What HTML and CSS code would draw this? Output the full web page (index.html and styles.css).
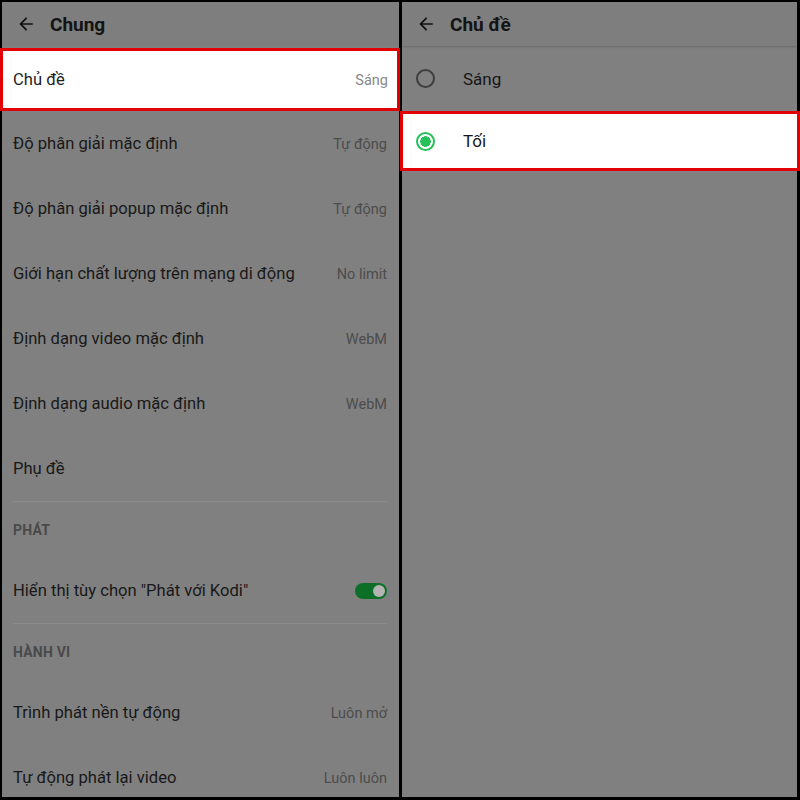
FILE: index.html
```html
<!DOCTYPE html>
<html lang="vi">
<head>
<meta charset="utf-8">
<link rel="stylesheet" href="styles.css">
</head>
<body>
<div class="frame">
  <section class="panel">
    <header class="bar">
      <svg class="back" viewBox="0 0 24 24"><path d="M20 11H7.83l5.59-5.59L12 4l-8 8 8 8 1.41-1.41L7.83 13H20v-2z"/></svg>
      <h1 class="title">Chung</h1>
    </header>
    <div class="list">
      <div class="row marked"><span class="label">Chủ đề</span><span class="value">Sáng</span></div>
      <div class="row"><span class="label">Độ phân giải mặc định</span><span class="value">Tự động</span></div>
      <div class="row"><span class="label">Độ phân giải popup mặc định</span><span class="value">Tự động</span></div>
      <div class="row"><span class="label">Giới hạn chất lượng trên mạng di động</span><span class="value">No limit</span></div>
      <div class="row"><span class="label">Định dạng video mặc định</span><span class="value">WebM</span></div>
      <div class="row"><span class="label">Định dạng audio mặc định</span><span class="value">WebM</span></div>
      <div class="row"><span class="label">Phụ đề</span></div>
      <div class="divider"></div>
      <div class="category">PHÁT</div>
      <div class="row"><span class="label">Hiển thị tùy chọn "Phát với Kodi"</span><span class="toggle"><span class="knob"></span></span></div>
      <div class="divider"></div>
      <div class="category">HÀNH VI</div>
      <div class="row"><span class="label">Trình phát nền tự động</span><span class="value">Luôn mở</span></div>
      <div class="row"><span class="label">Tự động phát lại video</span><span class="value">Luôn luôn</span></div>
    </div>
  </section>
  <section class="panel">
    <header class="bar shadow">
      <svg class="back" viewBox="0 0 24 24"><path d="M20 11H7.83l5.59-5.59L12 4l-8 8 8 8 1.41-1.41L7.83 13H20v-2z"/></svg>
      <h1 class="title">Chủ đề</h1>
    </header>
    <div class="list">
      <div class="option"><span class="radio"></span><span class="opt-label">Sáng</span></div>
      <div class="option marked-opt"><span class="radio on"></span><span class="opt-label">Tối</span></div>
    </div>
  </section>
</div>
</body>
</html>
```
FILE: styles.css
```css
* { box-sizing: border-box; }
html, body { margin: 0; padding: 0; }
body {
  background: #000;
  width: 800px;
  height: 800px;
  overflow: hidden;
  font-family: Roboto, "Noto Sans", sans-serif;
}
.frame {
  display: flex;
  gap: 3px;
  padding: 2px 3px 3px 2px;
  height: 800px;
}
.panel {
  background: #808080;
  display: flex;
  flex-direction: column;
  position: relative;
}
.panel:first-child { width: 397px; }
.panel:last-child { width: 395px; }
.bar {
  height: 44px;
  flex: none;
  display: flex;
  align-items: center;
  background: #7e7e7e;
  position: relative;
  z-index: 1;
}
.bar.shadow { box-shadow: 0 1px 2px rgba(0,0,0,0.18); }
.back {
  width: 20px;
  height: 20px;
  margin-left: 14px;
  fill: #111;
}
.title {
  margin: 0 0 0 14px;
  font-size: 19px;
  font-weight: 700;
  color: #141414;
}
.list { display: flex; flex-direction: column; }
.row {
  height: 65px;
  flex: none;
  display: flex;
  align-items: center;
  justify-content: space-between;
  padding: 0 12px 0 11px;
}
.label { font-size: 16.6px; color: #181818; }
.value { font-size: 14.5px; color: #4c4c4c; padding-top: 1px; }
.row.marked {
  height: 63px;
  margin: 2px -1px 0 -2px;
  border: 3px solid #e30000;
  background: #fff;
  padding: 0 9px 0 10px;
}
.row.marked .label { color: #1f1f1f; }
.row.marked .value { color: #888; }
.divider {
  height: 1px;
  background: #8b8b8b;
  margin: 0 12px 0 11px;
}
.category {
  height: 56px;
  display: flex;
  align-items: center;
  padding-left: 11px;
  font-size: 14px;
  font-weight: 700;
  color: #4a4a4a;
  letter-spacing: 0.2px;
}
.toggle {
  width: 32px;
  height: 16px;
  border-radius: 8px;
  background: #0d6f27;
  display: flex;
  align-items: center;
  justify-content: flex-end;
  padding-right: 2px;
}
.knob {
  width: 12px;
  height: 12px;
  border-radius: 50%;
  background: #b3b3b3;
}
.option {
  height: 65px;
  flex: none;
  display: flex;
  align-items: center;
  padding-left: 14px;
}
.option.marked-opt {
  height: 60px;
  margin: 0 -3px 0 -2px;
  border: 3px solid #e30000;
  background: #fff;
  padding-left: 13px;
}
.radio {
  width: 19px;
  height: 19px;
  border-radius: 50%;
  border: 2px solid #3e3e3e;
  flex: none;
}
.radio.on {
  border-color: #25c05a;
  background: radial-gradient(circle, #25c05a 0 5px, #fff 5.5px);
}
.opt-label {
  margin-left: 28px;
  font-size: 17px;
  color: #161616;
}
```
